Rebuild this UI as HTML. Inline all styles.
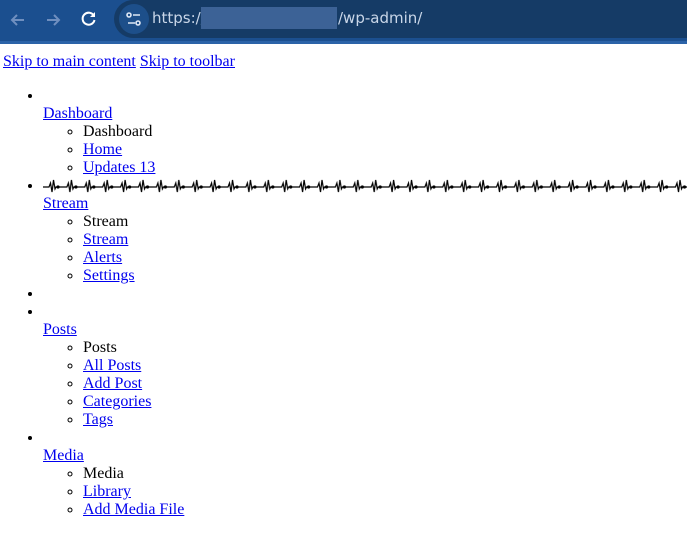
<!DOCTYPE html>
<html><head><meta charset="utf-8"><style>
html,body{margin:0;padding:0;overflow:hidden;width:687px;height:515px;background:#fff}
#bar{position:absolute;left:0;top:0;width:687px;height:44px;background:#1b4f8f;overflow:hidden}
#bar .line{position:absolute;left:0;top:41px;width:687px;height:3px;background:#2b63a8}
#pill{position:absolute;left:114px;top:0;width:573px;height:38px;background:#153b66;border-radius:19px 0 0 19px}
#ic{position:absolute;left:119px;top:4px;width:30px;height:30px;border-radius:15px;background:#1d4f8a}
.url{position:absolute;left:152px;top:9px;font:15px "DejaVu Sans","Liberation Sans",sans-serif;color:#c9d6e8}
#blur{position:absolute;left:201px;top:7px;width:136px;height:22px;background:#3c6296}
#page{position:absolute;left:0;top:45px;width:687px;font:16px/18px "Liberation Serif",serif;color:#000;overflow:hidden}
#page .in{margin:8px 3px}
a{color:#00e;text-decoration:underline}
ul{margin:16px 0;padding-left:40px}
ul ul{margin:0;list-style:circle}
.hb{display:inline-block;vertical-align:top;height:18px;width:644px}
</style></head><body>
<div id="bar"><div class="line"></div>
<svg style="position:absolute;left:8px;top:10px" width="20" height="20" viewBox="0 0 20 20"><path d="M16 10H4M9 5l-5 5 5 5" stroke="#6f8fbf" stroke-width="2" fill="none"/></svg>
<svg style="position:absolute;left:43px;top:10px" width="20" height="20" viewBox="0 0 20 20"><path d="M4 10h12M11 5l5 5-5 5" stroke="#6f8fbf" stroke-width="2" fill="none"/></svg>
<svg style="position:absolute;left:79px;top:8px" width="20" height="20" viewBox="0 0 20 20"><path d="M15 8A6 6 0 1 0 15.5 12" stroke="#fff" stroke-width="2" fill="none"/><path d="M16 4v5h-5z" fill="#fff"/></svg>
<div id="pill"></div><div id="ic"></div>
<svg style="position:absolute;left:125px;top:10px" width="18" height="18" viewBox="0 0 18 18"><circle cx="4" cy="5" r="2" stroke="#dfe8f5" stroke-width="1.6" fill="none"/><path d="M8 5h7M3 13h7" stroke="#dfe8f5" stroke-width="1.6"/><circle cx="13" cy="13" r="2" stroke="#dfe8f5" stroke-width="1.6" fill="none"/></svg>
<div class="url">https://</div><div id="blur"></div>
<div class="url" style="left:338px">/wp-admin/</div>
</div>
<div id="page"><div class="in">
<a href="#">Skip to main content</a> <a href="#">Skip to toolbar</a>
<ul>
<li><br><a href="#">Dashboard</a><ul><li>Dashboard</li><li><a href="#">Home</a></li><li><a href="#">Updates 13</a></li></ul></li>
<li><svg class="hb" width="644" height="18" viewBox="0 0 644 18"><defs><pattern id="p" width="17.9" height="18" patternUnits="userSpaceOnUse"><path d="M0 10H6L7.5 6 9 15 10.5 3 12 12 13 10H17.9" stroke="#000" stroke-width="1.2" fill="none"/><circle cx="15" cy="10" r="1.6"/></pattern></defs><rect x="0" y="0" width="644" height="18" fill="url(#p)"/></svg><br><a href="#">Stream</a><ul><li>Stream</li><li><a href="#">Stream</a></li><li><a href="#">Alerts</a></li><li><a href="#">Settings</a></li></ul></li>
<li></li>
<li><br><a href="#">Posts</a><ul><li>Posts</li><li><a href="#">All Posts</a></li><li><a href="#">Add Post</a></li><li><a href="#">Categories</a></li><li><a href="#">Tags</a></li></ul></li>
<li><br><a href="#">Media</a><ul><li>Media</li><li><a href="#">Library</a></li><li><a href="#">Add Media File</a></li></ul></li>
</ul>
</div></div>
</body></html>
